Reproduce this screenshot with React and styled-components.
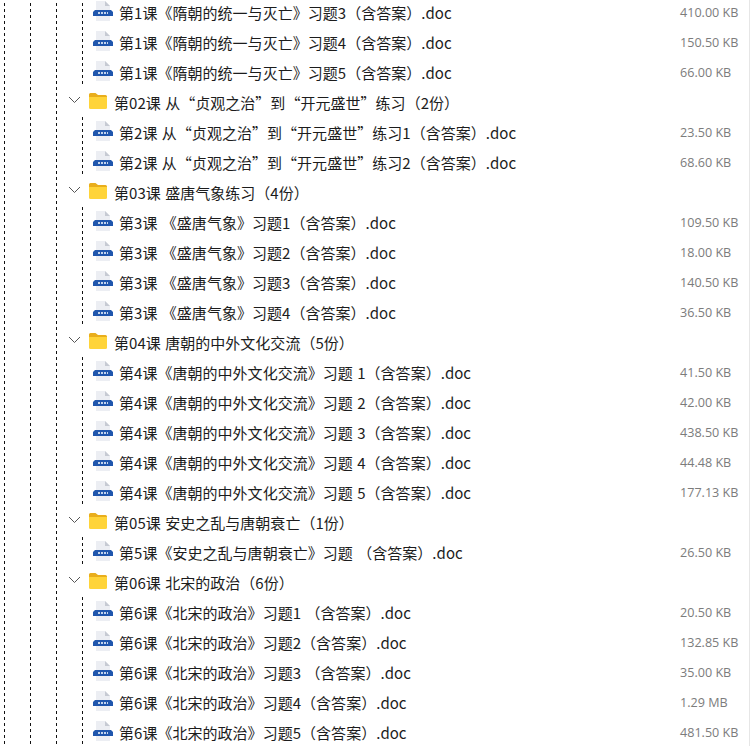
import styled, { createGlobalStyle } from "styled-components";

const GlobalStyle = createGlobalStyle`
  html, body {
    margin: 0;
    padding: 0;
    background: #fff;
  }
`;

const Page = styled.div`
  width: 750px;
  height: 746px;
  overflow: hidden;
  box-sizing: border-box;
  border-right: 1px solid #e6e6e6;
  font-family: "Noto Sans CJK SC", "Liberation Sans", sans-serif;
`;

const Tree = styled.div`
  display: flex;
  flex-direction: column;
  margin-top: -3px;
`;

const Row = styled.div`
  display: flex;
  align-items: center;
  height: 30px;
`;

const Guide = styled.div`
  flex: none;
  align-self: stretch;
  width: ${({ $width }) => $width}px;
  background-image: linear-gradient(#111 0 3px, transparent 3px 6px);
  background-size: 1px 6px;
  background-repeat: repeat-y;
  background-position: ${({ $left }) => $left}px 0;
`;

const Chevron = styled.svg`
  flex: none;
  width: 13px;
  height: 8px;
  margin: -5px 7px 0 -14px;
`;

const Name = styled.div`
  flex: none;
  width: ${({ $folder }) => ($folder ? 560 : 561)}px;
  font-size: 15px;
  letter-spacing: 0.03px;
  word-spacing: 1px;
  color: #1c1c1c;
  white-space: pre;
`;

const Size = styled.div`
  flex: none;
  width: 68px;
  margin-top: 1px;
  font-family: "Open Sans", "Liberation Sans", sans-serif;
  font-size: 12.6px;
  color: #7c7c7c;
  white-space: pre;
`;

const FileGlyph = styled.svg`
  flex: none;
  width: 20px;
  height: 20px;
  margin: -2px 6px 0 10px;
`;

const FolderGlyph = styled.svg`
  flex: none;
  width: 20px;
  height: 18px;
  margin: -2px 6px 0 0;
`;

const FileIcon = () => (
  <FileGlyph viewBox="0 0 20 20">
    <path d="M3 0h9l5 5v15H3z" fill="#eceef3" />
    <path d="M12 0l5 5h-5z" fill="#c6cad3" />
    <path d="M0 11l2-2h16l2 2v4H0z" fill="#1f56ad" />
    <path d="M5 12h10" stroke="#c3d4ee" strokeWidth="2" strokeDasharray="2 1" />
  </FileGlyph>
);

const FolderIcon = () => (
  <FolderGlyph viewBox="0 0 20 18">
    <path d="M1 2.500Q1 1 2.500 1h5L10 3h7.500Q19 3 19 4.500V6H1z" fill="#e9ae1c" />
    <path d="M1 5h18v10.500q0 1.500-1.500 1.500h-15Q1 17 1 15.500z" fill="#ffd439" />
  </FolderGlyph>
);

const rows = [
  ["第1课《隋朝的统一与灭亡》习题3（含答案）.doc", "410.00 KB"],
  ["第1课《隋朝的统一与灭亡》习题4（含答案）.doc", "150.50 KB"],
  ["第1课《隋朝的统一与灭亡》习题5（含答案）.doc", "66.00 KB"],
  ["第02课 从“贞观之治”到“开元盛世”练习（2份）"],
  ["第2课 从“贞观之治”到“开元盛世”练习1（含答案）.doc", "23.50 KB"],
  ["第2课 从“贞观之治”到“开元盛世”练习2（含答案）.doc", "68.60 KB"],
  ["第03课 盛唐气象练习（4份）"],
  ["第3课 《盛唐气象》习题1（含答案）.doc", "109.50 KB"],
  ["第3课 《盛唐气象》习题2（含答案）.doc", "18.00 KB"],
  ["第3课 《盛唐气象》习题3（含答案）.doc", "140.50 KB"],
  ["第3课 《盛唐气象》习题4（含答案）.doc", "36.50 KB"],
  ["第04课 唐朝的中外文化交流（5份）"],
  ["第4课《唐朝的中外文化交流》习题 1（含答案）.doc", "41.50 KB"],
  ["第4课《唐朝的中外文化交流》习题 2（含答案）.doc", "42.00 KB"],
  ["第4课《唐朝的中外文化交流》习题 3（含答案）.doc", "438.50 KB"],
  ["第4课《唐朝的中外文化交流》习题 4（含答案）.doc", "44.48 KB"],
  ["第4课《唐朝的中外文化交流》习题 5（含答案）.doc", "177.13 KB"],
  ["第05课 安史之乱与唐朝衰亡（1份）"],
  ["第5课《安史之乱与唐朝衰亡》习题 （含答案）.doc", "26.50 KB"],
  ["第06课 北宋的政治（6份）"],
  ["第6课《北宋的政治》习题1 （含答案）.doc", "20.50 KB"],
  ["第6课《北宋的政治》习题2（含答案）.doc", "132.85 KB"],
  ["第6课《北宋的政治》习题3 （含答案）.doc", "35.00 KB"],
  ["第6课《北宋的政治》习题4（含答案）.doc", "1.29 MB"],
  ["第6课《北宋的政治》习题5（含答案）.doc", "481.50 KB"],
];

const App = () => (
  <Page>
    <GlobalStyle />
    <Tree>
      {rows.map(([name, size]) => (
        <Row key={name}>
          <Guide $width={30} $left={4} />
          <Guide $width={26} $left={0} />
          <Guide $width={26} $left={0} />
          {size ? (
            <>
              <Guide $width={1} $left={0} />
              <FileIcon />
              <Name>{name}</Name>
              <Size>{size}</Size>
            </>
          ) : (
            <>
              <Chevron viewBox="0 0 13 8">
                <path d="M1 1l5.500 5.500L12 1" fill="none" stroke="#555" strokeWidth="1" />
              </Chevron>
              <FolderIcon />
              <Name $folder>{name}</Name>
            </>
          )}
        </Row>
      ))}
    </Tree>
  </Page>
);

export default App;
